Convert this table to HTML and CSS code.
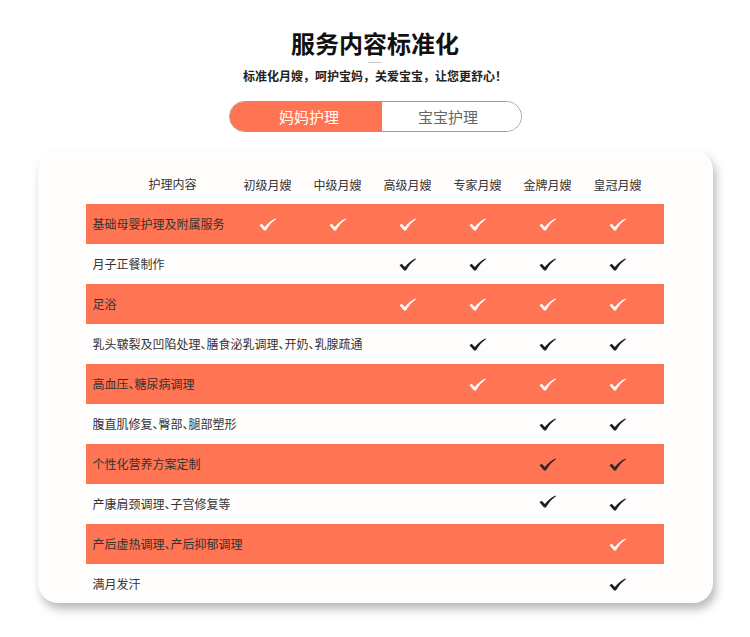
FILE: index.html
```html
<!DOCTYPE html>
<html lang="zh">
<head>
<meta charset="utf-8">
<link rel="stylesheet" href="styles.css">
</head>
<body>
<svg width="0" height="0" class="defs">
  <defs>
    <path id="ck" d="M0.5 7.2 L2.6 5.7 L5.9 9.1 C9 5 12.5 2.2 16.5 0.4 L17 1.3 C13 4 9.6 7.8 6.9 12.6 L5.1 12.6 Z"/>
  </defs>
</svg>
<div class="page">
  <header class="head">
    <h1 class="title">服务内容标准化</h1>
    <div class="divider"></div>
    <p class="subtitle">标准化月嫂，呵护宝妈，关爱宝宝，让您更舒心！</p>
    <div class="tabs">
      <div class="tab active">妈妈护理</div>
      <div class="tab">宝宝护理</div>
    </div>
  </header>

  <section class="card">
    <div class="table">
      <div class="row hdr">
        <div class="name hname">护理内容</div>
        <div class="c">初级月嫂</div>
        <div class="c">中级月嫂</div>
        <div class="c">高级月嫂</div>
        <div class="c">专家月嫂</div>
        <div class="c">金牌月嫂</div>
        <div class="c">皇冠月嫂</div>
      </div>
      <div class="row hl">
        <div class="name">基础母婴护理及附属服务</div>
        <div class="c"><svg class="tick" viewBox="0 0 17 13"><use href="#ck"/></svg></div>
        <div class="c"><svg class="tick" viewBox="0 0 17 13"><use href="#ck"/></svg></div>
        <div class="c"><svg class="tick" viewBox="0 0 17 13"><use href="#ck"/></svg></div>
        <div class="c"><svg class="tick" viewBox="0 0 17 13"><use href="#ck"/></svg></div>
        <div class="c"><svg class="tick" viewBox="0 0 17 13"><use href="#ck"/></svg></div>
        <div class="c"><svg class="tick" viewBox="0 0 17 13"><use href="#ck"/></svg></div>
      </div>
      <div class="row">
        <div class="name">月子正餐制作</div>
        <div class="c"></div>
        <div class="c"></div>
        <div class="c"><svg class="tick" viewBox="0 0 17 13"><use href="#ck"/></svg></div>
        <div class="c"><svg class="tick" viewBox="0 0 17 13"><use href="#ck"/></svg></div>
        <div class="c"><svg class="tick" viewBox="0 0 17 13"><use href="#ck"/></svg></div>
        <div class="c"><svg class="tick" viewBox="0 0 17 13"><use href="#ck"/></svg></div>
      </div>
      <div class="row hl">
        <div class="name">足浴</div>
        <div class="c"></div>
        <div class="c"></div>
        <div class="c"><svg class="tick" viewBox="0 0 17 13"><use href="#ck"/></svg></div>
        <div class="c"><svg class="tick" viewBox="0 0 17 13"><use href="#ck"/></svg></div>
        <div class="c"><svg class="tick" viewBox="0 0 17 13"><use href="#ck"/></svg></div>
        <div class="c"><svg class="tick" viewBox="0 0 17 13"><use href="#ck"/></svg></div>
      </div>
      <div class="row">
        <div class="name">乳头皲裂及凹陷处理、膳食泌乳调理、开奶、乳腺疏通</div>
        <div class="c"></div>
        <div class="c"></div>
        <div class="c"></div>
        <div class="c"><svg class="tick" viewBox="0 0 17 13"><use href="#ck"/></svg></div>
        <div class="c"><svg class="tick" viewBox="0 0 17 13"><use href="#ck"/></svg></div>
        <div class="c"><svg class="tick" viewBox="0 0 17 13"><use href="#ck"/></svg></div>
      </div>
      <div class="row hl">
        <div class="name">高血压、糖尿病调理</div>
        <div class="c"></div>
        <div class="c"></div>
        <div class="c"></div>
        <div class="c"><svg class="tick" viewBox="0 0 17 13"><use href="#ck"/></svg></div>
        <div class="c"><svg class="tick" viewBox="0 0 17 13"><use href="#ck"/></svg></div>
        <div class="c"><svg class="tick" viewBox="0 0 17 13"><use href="#ck"/></svg></div>
      </div>
      <div class="row">
        <div class="name">腹直肌修复、臀部、腿部塑形</div>
        <div class="c"></div>
        <div class="c"></div>
        <div class="c"></div>
        <div class="c"></div>
        <div class="c"><svg class="tick" viewBox="0 0 17 13"><use href="#ck"/></svg></div>
        <div class="c"><svg class="tick" viewBox="0 0 17 13"><use href="#ck"/></svg></div>
      </div>
      <div class="row hl">
        <div class="name">个性化营养方案定制</div>
        <div class="c"></div>
        <div class="c"></div>
        <div class="c"></div>
        <div class="c"></div>
        <div class="c"><svg class="tick dark" viewBox="0 0 17 13"><use href="#ck"/></svg></div>
        <div class="c"><svg class="tick dark" viewBox="0 0 17 13"><use href="#ck"/></svg></div>
      </div>
      <div class="row">
        <div class="name">产康肩颈调理、子宫修复等</div>
        <div class="c"></div>
        <div class="c"></div>
        <div class="c"></div>
        <div class="c"></div>
        <div class="c"><svg class="tick up" viewBox="0 0 17 13"><use href="#ck"/></svg></div>
        <div class="c"><svg class="tick" viewBox="0 0 17 13"><use href="#ck"/></svg></div>
      </div>
      <div class="row hl">
        <div class="name">产后虚热调理、产后抑郁调理</div>
        <div class="c"></div>
        <div class="c"></div>
        <div class="c"></div>
        <div class="c"></div>
        <div class="c"></div>
        <div class="c"><svg class="tick" viewBox="0 0 17 13"><use href="#ck"/></svg></div>
      </div>
      <div class="row">
        <div class="name">满月发汗</div>
        <div class="c"></div>
        <div class="c"></div>
        <div class="c"></div>
        <div class="c"></div>
        <div class="c"></div>
        <div class="c"><svg class="tick" viewBox="0 0 17 13"><use href="#ck"/></svg></div>
      </div>
    </div>
  </section>
</div>
</body>
</html>
```

FILE: styles.css
```css
* { box-sizing: border-box; }

html, body {
  margin: 0;
  padding: 0;
  background: #ffffff;
}

body {
  font-family: "Noto Sans CJK SC", "Noto Sans", sans-serif;
  color: #333333;
}

.defs {
  position: absolute;
  width: 0;
  height: 0;
  overflow: hidden;
}

.page {
  width: 750px;
  height: 637px;
  overflow: hidden;
}

.head {
  padding-top: 27px;
  text-align: center;
}

.title {
  margin: 0;
  font-size: 24px;
  line-height: 32px;
  font-weight: 700;
  color: #111111;
}

.divider {
  width: 14px;
  height: 1px;
  background: #c8c8c8;
  margin: 3px auto 0;
}

.subtitle {
  margin: 5px 0 0;
  font-size: 12px;
  line-height: 16px;
  font-weight: 700;
  color: #222222;
}

.tabs {
  display: flex;
  width: 293px;
  height: 31px;
  margin: 17px auto 0;
  border: 1px solid #9a9a9a;
  border-radius: 16px;
  overflow: hidden;
}

.tab {
  display: flex;
  align-items: center;
  justify-content: center;
  font-size: 15px;
  color: #666666;
  background: #ffffff;
  width: 139px;
  padding-right: 6px;
}

.tab.active {
  width: 153px;
  margin: -1px 0 -1px -1px;
  background: #ff7452;
  color: #ffffff;
  padding-right: 0;
  padding-left: 8px;
}

.card {
  width: 675px;
  height: 453px;
  margin: 18px auto 0;
  background: #fffcfc;
  border-radius: 20px;
  box-shadow: 3px 6px 10px rgba(0, 0, 0, 0.28);
  padding: 14px 49px 0 48px;
  overflow: hidden;
}

.table {
  display: flex;
  flex-direction: column;
}

.row {
  display: grid;
  grid-template-columns: 147px repeat(6, 70px) 1fr;
  height: 40px;
  align-items: center;
  font-size: 12px;
}

.row.hl {
  background: #ff7452;
}

.name {
  white-space: nowrap;
  padding-left: 7px;
  color: #333333;
  line-height: 16px;
  font-feature-settings: "halt" 1;
}

.hdr .hname {
  padding-left: 63px;
}

.hdr .c {
  font-size: 12px;
  color: #333333;
}

.c {
  display: flex;
  justify-content: center;
  align-items: center;
}

.tick {
  width: 17px;
  height: 13px;
  fill: #1f1f1f;
  display: block;
}

.hl .tick {
  fill: #ffffff;
}

.hl .tick.dark {
  fill: #2a2a2a;
}

.tick.up {
  margin-top: -6px;
}
```
